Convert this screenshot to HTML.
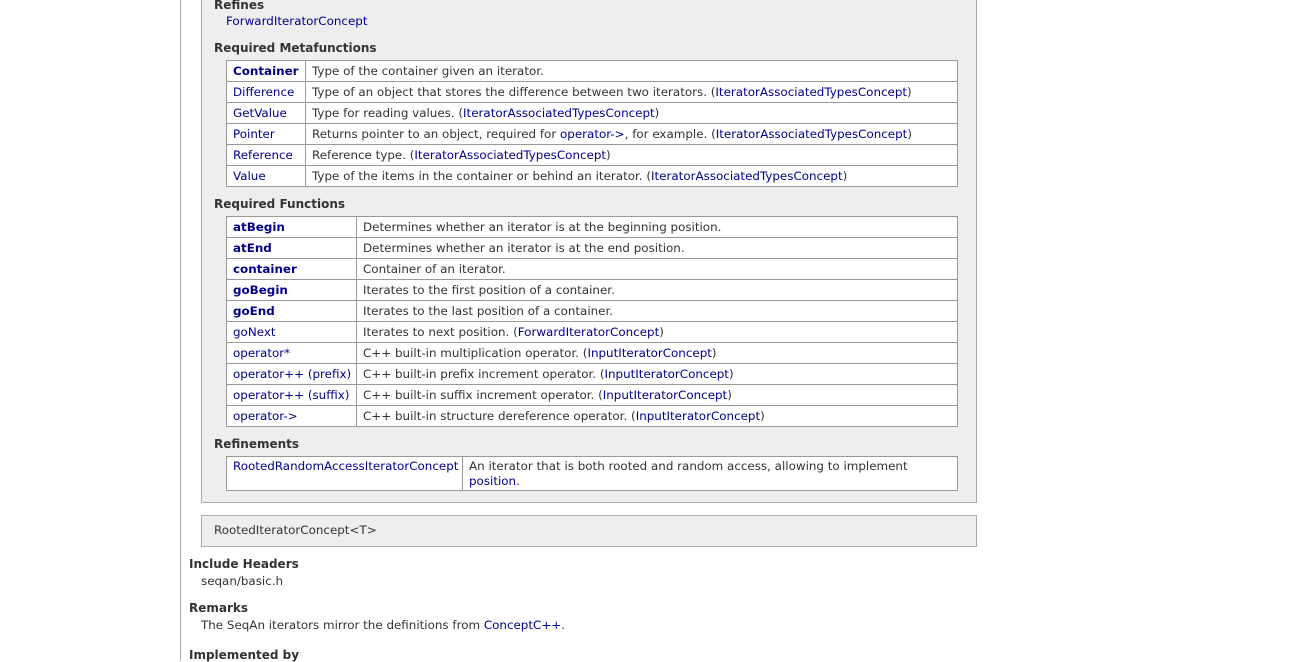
<!DOCTYPE html>
<html><head><meta charset="utf-8"><style>
body{margin:0;width:1310px;height:661px;background:#fff;overflow:hidden;position:relative;font-family:"DejaVu Sans","Liberation Sans",sans-serif;font-size:11.9px;color:#333}
a{color:#00008b;text-decoration:none}
.vl{position:absolute;left:180px;top:0;width:1px;height:661px;background:#aaa}
.box{position:absolute;left:201px;width:774px;background:#eee;border:1px solid #aaa}
.h{position:absolute;font-weight:bold;font-size:12px;color:#333}
.t{position:absolute;left:226px;width:732px;border-collapse:collapse;background:#fff;table-layout:fixed}
.t td{border:1px solid #999;height:20px;padding:0 6px;white-space:nowrap;line-height:14px;overflow:hidden}
.b a{font-weight:bold}
.p{position:absolute}
</style></head><body>
<div class="vl"></div>
<div class="box" style="top:-2px;height:503px"></div>
<div class="box" style="top:515px;height:30px"></div>
<div class="h" style="left:214px;top:-2px">Refines</div>
<div class="p" style="left:226px;top:14px"><a>ForwardIteratorConcept</a></div>
<div class="h" style="left:214px;top:41px">Required Metafunctions</div>
<table class="t" style="top:60px">
<col style="width:79px"><col>
<tr><td class="b"><a>Container</a></td><td>Type of the container given an iterator.</td></tr>
<tr><td><a>Difference</a></td><td>Type of an object that stores the difference between two iterators. (<a>IteratorAssociatedTypesConcept</a>)</td></tr>
<tr><td><a>GetValue</a></td><td>Type for reading values. (<a>IteratorAssociatedTypesConcept</a>)</td></tr>
<tr><td><a>Pointer</a></td><td>Returns pointer to an object, required for <a>operator-&gt;</a>, for example. (<a>IteratorAssociatedTypesConcept</a>)</td></tr>
<tr><td><a>Reference</a></td><td>Reference type. (<a>IteratorAssociatedTypesConcept</a>)</td></tr>
<tr><td><a>Value</a></td><td>Type of the items in the container or behind an iterator. (<a>IteratorAssociatedTypesConcept</a>)</td></tr>
</table>
<div class="h" style="left:214px;top:197px">Required Functions</div>
<table class="t" style="top:216px">
<col style="width:130px"><col>
<tr><td class="b"><a>atBegin</a></td><td>Determines whether an iterator is at the beginning position.</td></tr>
<tr><td class="b"><a>atEnd</a></td><td>Determines whether an iterator is at the end position.</td></tr>
<tr><td class="b"><a>container</a></td><td>Container of an iterator.</td></tr>
<tr><td class="b"><a>goBegin</a></td><td>Iterates to the first position of a container.</td></tr>
<tr><td class="b"><a>goEnd</a></td><td>Iterates to the last position of a container.</td></tr>
<tr><td><a>goNext</a></td><td>Iterates to next position. (<a>ForwardIteratorConcept</a>)</td></tr>
<tr><td><a>operator*</a></td><td>C++ built-in multiplication operator. (<a>InputIteratorConcept</a>)</td></tr>
<tr><td><a>operator++ (prefix)</a></td><td>C++ built-in prefix increment operator. (<a>InputIteratorConcept</a>)</td></tr>
<tr><td><a>operator++ (suffix)</a></td><td>C++ built-in suffix increment operator. (<a>InputIteratorConcept</a>)</td></tr>
<tr><td><a>operator-&gt;</a></td><td>C++ built-in structure dereference operator. (<a>InputIteratorConcept</a>)</td></tr>
</table>
<div class="h" style="left:214px;top:437px">Refinements</div>
<table class="t" style="top:456px">
<col style="width:236px"><col>
<tr><td style="height:31px;vertical-align:top;padding-top:2px"><a>RootedRandomAccessIteratorConcept</a></td><td style="height:31px;white-space:normal;vertical-align:top;padding-top:2px;line-height:15px">An iterator that is both rooted and random access, allowing to implement<br><a>position</a>.</td></tr>
</table>
<div class="p" style="left:214px;top:523px">RootedIteratorConcept&lt;T&gt;</div>
<div class="h" style="left:189px;top:557px">Include Headers</div>
<div class="p" style="left:201px;top:574px">seqan/basic.h</div>
<div class="h" style="left:189px;top:601px">Remarks</div>
<div class="p" style="left:201px;top:618px">The SeqAn iterators mirror the definitions from <a>ConceptC++</a>.</div>
<div class="h" style="left:189px;top:648px">Implemented by</div>
</body></html>
